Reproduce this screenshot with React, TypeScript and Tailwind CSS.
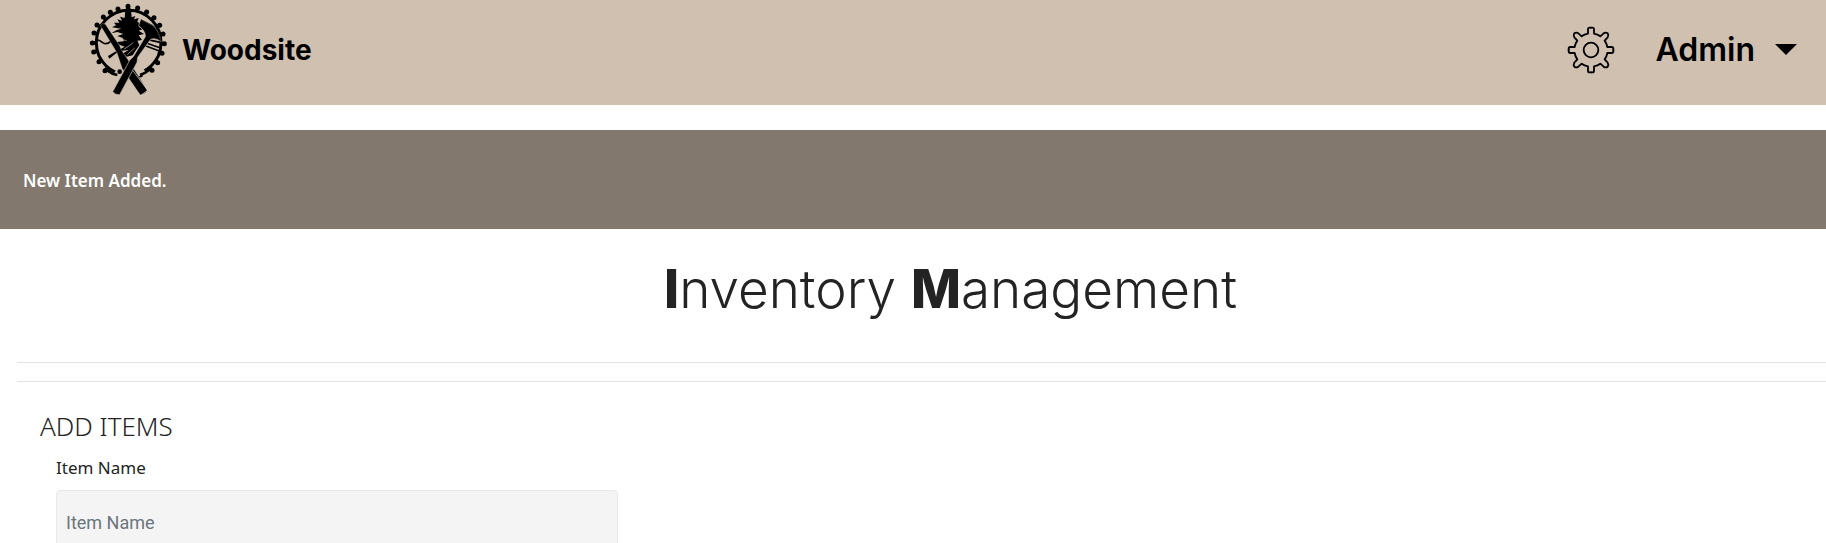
import React from "react";

const teeth: [number, number][] = [
  [144, 19], [173, 24], [200, 36], [222, 53], [239, 76], [249, 102], [253, 131],
  [246, 160], [233, 188], [216, 211], [181, 225], [119, 215], [75, 212], [57, 185],
  [41, 156], [37, 129], [42, 99], [51, 75], [70, 51], [91, 37], [114, 27],
];

function Logo() {
  return (
    <svg viewBox="24 9 240 288" className="h-24 w-20" aria-hidden="true">
      <circle cx="146" cy="128" r="97" fill="none" stroke="#000" strokeWidth="9" />
      {teeth.map(([x, y]) => (
        <g key={`${x}-${y}`}>
          <line x1={x} y1={y} x2={x + (146 - x) * 0.12} y2={y + (128 - y) * 0.12} stroke="#000" strokeWidth="11" />
          <circle cx={x} cy={y} r="7.5" />
        </g>
      ))}
      <path d="M100 222Q146 246 200 220L170 180L130 180Z" fill="#cfc0b0" />
      <path d="M82 211Q96 222 112 225M180 225Q196 220 210 208" fill="none" stroke="#000" strokeWidth="8" />
      <circle cx="119" cy="215" r="7" />
      <path d="M144 16L153 28L155 52L166 48L162 58L176 54L172 66L184 72L176 80L188 88L176 92L192 102L176 106L186 120L172 122L178 136L168 150L158 166L140 170L130 160L146 150L116 154L88 176L84 168L104 156L134 140L118 134L110 126L132 124L128 114L112 108L130 102L112 96L94 100L110 90L124 86L96 82L108 76L102 68L118 68L112 58L126 62L120 50L134 54L136 28Z" />
      <path d="M46 119Q60 120 68 128Q80 136 92 124M190 126L242 144M192 136L236 152M200 118L244 128" fill="none" stroke="#000" strokeWidth="5" />
      <path d="M132 148L160 128M142 164L164 144M116 116L140 122" fill="none" stroke="#cfc0b0" strokeWidth="2" />
      <path d="M61 76Q66 67 76 73L119 137L124 150L143 178L202 271Q194 284 181 285L127 206L111 158Z" stroke="#cfc0b0" strokeWidth="1" />
      <path d="M154 206L203 271L181 287" fill="none" stroke="#eee9e2" strokeWidth="2" />
      <path d="M182 58L220 77Q237 94 243 125Q226 112 212 118L173 172L171 187L119 284Q107 286 98 275L149 181L160 170L196 110Q198 94 176 77Z" stroke="#cfc0b0" strokeWidth="2" />
      <path d="M183 59L220 77Q237 92 243 125" fill="none" stroke="#000" strokeWidth="2" />
    </svg>
  );
}

function GearIcon() {
  return (
    <svg
      viewBox="-72 -72 144 144"
      className="size-12"
      fill="none"
      stroke="#000"
      strokeWidth="5.5"
      strokeLinejoin="round"
      strokeLinecap="round"
      aria-hidden="true"
    >
      <circle r="22" />
      {[0, 90, 180, 270].map((angle) => (
        <path
          key={angle}
          transform={`rotate(${angle})`}
          d="M0 -67H4Q9 -67 9 -62V-49Q20 -47 28 -41L38 -50Q44 -54 50 -50Q54 -44 50 -38L41 -28Q47 -20 49 -9H62Q67 -9 67 -4V0"
        />
      ))}
    </svg>
  );
}

export default function App() {
  return (
    <div className="h-screen overflow-hidden bg-white font-['Noto_Sans',sans-serif] text-[17px] text-[#232323]">
      <header className="flex h-[105px] items-center justify-between bg-[#cfc0b0] pr-[29px] pl-22 text-black">
        <a href="#" className="flex h-full items-start gap-3.5">
          <span className="pt-[3px]">
            <Logo />
          </span>
          <span className="self-center pb-1.5 font-[Inter,sans-serif] text-[28px] leading-10 font-bold">Woodsite</span>
        </a>
        <nav className="flex items-center gap-10 pb-1.5">
          <a href="#" aria-label="Settings">
            <GearIcon />
          </a>
          <button type="button" className="flex items-center gap-5 font-[Inter,sans-serif] text-[32px] leading-10 font-semibold">
            Admin
            <svg viewBox="0 0 22 11" className="h-[11px] w-[22px]" aria-hidden="true">
              <path d="M0 0H22L11 11Z" />
            </svg>
          </button>
        </nav>
      </header>

      <div role="status" className="mt-[25px] flex h-[99px] items-center bg-[#82786e] px-[23px] pt-0.5 font-semibold text-white">
        New Item Added.
      </div>

      <main className="pl-[17px]">
        <h1 className="pt-6 pl-[58px] text-center font-[Inter,sans-serif] text-[53px] leading-[72px] font-light">
          <b className="font-extrabold">I</b>nventory <b className="font-extrabold">M</b>anagement
        </h1>
        <hr className="mt-[37px] border-[#e3e3e3]" />
        <hr className="mt-[18px] border-[#e3e3e3]" />

        <form className="max-w-[601px] pt-[26px] pl-[23px]">
          <h2 className="text-[26px] leading-9 font-light">ADD ITEMS</h2>
          <div className="pt-2.5 pl-4">
            <label htmlFor="item-name" className="block leading-7">
              Item Name
            </label>
            <input
              id="item-name"
              type="text"
              placeholder="Item Name"
              className="mt-2 block h-16 w-full rounded-sm border border-[#e8e8e8] bg-[#f4f4f4] px-[9px] font-[Roboto,sans-serif] text-lg placeholder:text-[#6c757d]"
            />
          </div>
        </form>
      </main>
    </div>
  );
}
